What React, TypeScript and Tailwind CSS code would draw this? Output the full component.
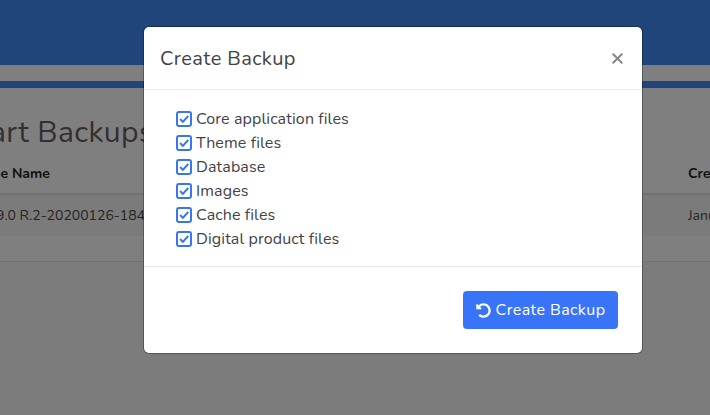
import { X } from 'lucide-react';
import { FaUndoAlt } from 'react-icons/fa';

const FILES = [
  'Core application files',
  'Theme files',
  'Database',
  'Images',
  'Cache files',
  'Digital product files',
];

function CheckBox() {
  return (
    <span className="flex h-[16px] w-[16px] shrink-0 items-center justify-center rounded-[3px] border-2 border-[#3a76e8] bg-white">
      <svg viewBox="0 0 12 12" className="h-[12px] w-[12px]" fill="none" stroke="#3a76e8" strokeWidth="1.9">
        <path d="M2 6 L4.9 8.8 L10.2 3" />
      </svg>
    </span>
  );
}

export default function App() {
  return (
    <div className="relative h-[415px] w-[710px] overflow-hidden bg-[#f8f8f8] font-['Nunito','Lato',sans-serif] text-[#3f4347]">
      {/* Page behind the dialog */}
      <div className="h-[65px] bg-[#3f8af6]" />
      <div className="h-[16px] bg-white" />
      <div className="h-[7px] bg-[#3f8af6]" />
      <div className="h-[174px] bg-white">
        <h1 className="ml-[-55px] whitespace-nowrap pt-[24px] text-[30px] leading-[42px] tracking-[0.4px] text-[#6b5f5f]">
          Smart Backups
        </h1>
        <div className="flex h-[41px] items-center justify-between border-b-2 border-[#dee2e6] text-[14px] font-bold text-[#1f2327]">
          <span className="ml-[-37px] whitespace-nowrap">Theme Name</span>
          <span className="w-[22px] overflow-hidden whitespace-nowrap">Created</span>
        </div>
        <div className="flex h-[41px] items-center justify-between bg-[#f6f6f6] text-[14px] text-[#4a4a4a]">
          <span className="ml-[-4px] whitespace-nowrap">9.0 R.2-20200126-1840</span>
          <span className="w-[22px] overflow-hidden whitespace-nowrap">January</span>
        </div>
        <div className="h-[26px] border-b border-[#dee2e6]" />
      </div>

      {/* Backdrop and dialog */}
      <div className="absolute inset-0 bg-black/50" />
      <div className="absolute left-[144px] top-[27px] w-[498px] rounded-[5px] bg-white shadow-[0_0_0_1px_rgba(0,0,0,0.3)]">
        <div className="flex h-[63px] items-center justify-between border-b border-[#e9ecef] px-[16px]">
          <h2 className="pt-[1px] text-[20px] tracking-[0.4px] text-[#3f4347]">Create Backup</h2>
          <X size={17} strokeWidth={2.8} className="text-[#868686]" />
        </div>
        <div className="flex h-[177px] flex-col border-b border-[#e9ecef] pl-[32px] pt-[17px]">
          {FILES.map((name) => (
            <label key={name} className="flex h-[24px] items-center gap-[4px] text-[16px] tracking-[0.12px]">
              <CheckBox />
              <span className="whitespace-nowrap">{name}</span>
            </label>
          ))}
        </div>
        <div className="flex h-[86px] items-start justify-end pr-[24px] pt-[24px]">
          <button className="flex h-[38px] w-[155px] items-center justify-center gap-[5px] rounded-[4px] bg-[#3874f8] text-[16px] tracking-[0.4px] text-white">
            <FaUndoAlt size={15} />
            Create Backup
          </button>
        </div>
      </div>
    </div>
  );
}
